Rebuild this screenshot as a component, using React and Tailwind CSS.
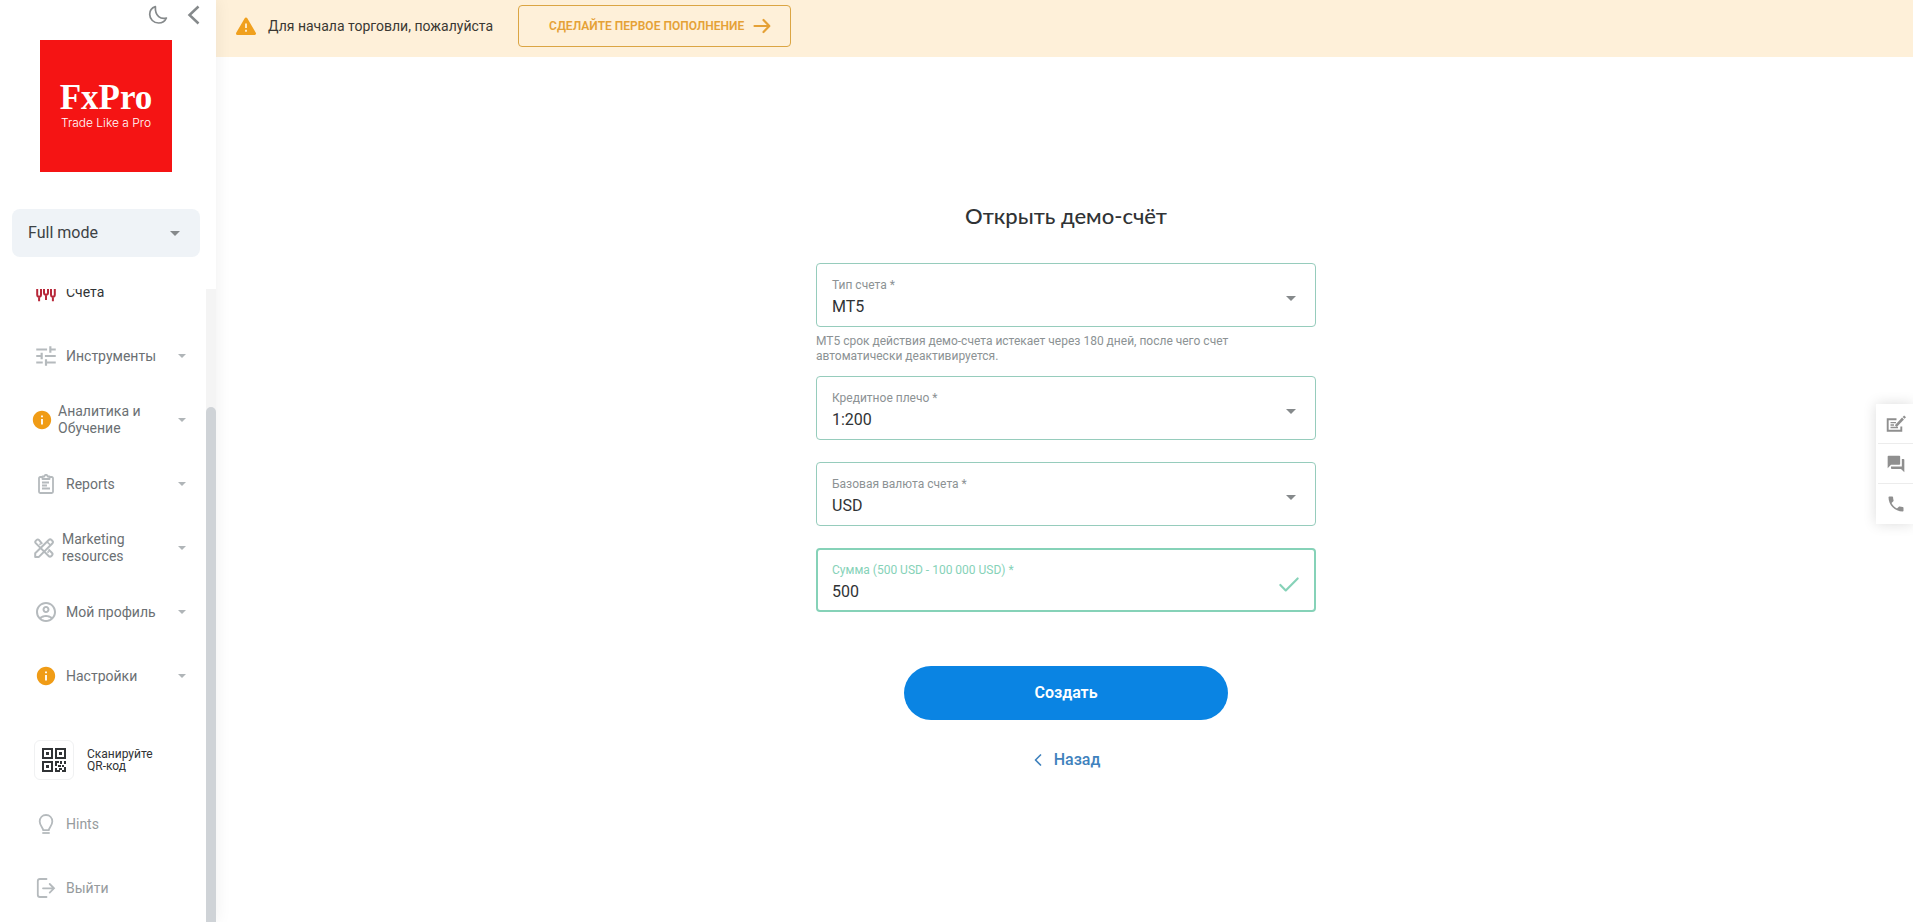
import React from 'react'
import {
  MdInfo,
  MdOutlineAccountCircle,
  MdPhone,
  MdQuestionAnswer,
  MdTune,
} from 'react-icons/md'
import { Check, ChevronLeft } from 'lucide-react'

function Caret({ className }) {
  return (
    <svg viewBox="0 0 10 5" className={className} fill="currentColor" aria-hidden="true">
      <path d="M0 0h10L5 5z" />
    </svg>
  )
}

function MoonIcon() {
  return (
    <svg viewBox="0 0 20 20" className="size-5" fill="none" stroke="currentColor" strokeWidth="1.7" strokeLinejoin="round">
      <path d="M7.4 1.6C4 2.7 1.7 5.8 1.7 9.3c0 4.9 4 8.7 8.9 8.7 3.5 0 6.5-2 7.8-5-5.300 1.300-11.600-1.200-11-11.400z" />
    </svg>
  )
}

function WarningIcon() {
  return (
    <svg viewBox="0 0 24 24" className="size-6 shrink-0">
      <path d="M12 5 20.500 19.500H3.500z" fill="#f0a01e" stroke="#f0a01e" strokeWidth="3" strokeLinejoin="round" />
      <path d="M12 9.500v4.500M12 15.800v2" stroke="#fef0d9" strokeWidth="1.800" />
    </svg>
  )
}

function ArrowIcon() {
  return (
    <svg viewBox="0 0 20 20" className="size-5 shrink-0" fill="none" stroke="currentColor" strokeWidth="2.200" strokeLinecap="round" strokeLinejoin="round">
      <path d="M2.500 10h14.500M11.500 4l5.800 6-5.800 6" />
    </svg>
  )
}

function AccountsIcon() {
  return (
    <svg viewBox="0 0 20 20" className="size-5" fill="none" stroke="#b8283a" strokeWidth="2">
      <path d="M1.200 4v8.500c0 1.500.6 2.200 1.900 2.200S5 14 5 12.500V4M3.100 14.700v4.500" />
      <path d="M8 4v6.500c0 1.500.7 2.200 2 2.200s2-.7 2-2.200V4M10 12.700v5.300" />
      <path d="M15 4v8.500c0 1.500.6 2.200 1.900 2.200s1.900-.7 1.900-2.200V4M16.900 14.700v4.500" />
    </svg>
  )
}

function ClipboardIcon() {
  return (
    <svg viewBox="0 0 20 20" className="size-5" fill="none" stroke="currentColor" strokeWidth="1.800" strokeLinejoin="round">
      <path d="M6.500 3H4.200c-.7 0-1.200.5-1.200 1.200v13.600c0 .7.5 1.200 1.200 1.200h11.600c.7 0 1.200-.5 1.200-1.200V4.200c0-.7-.5-1.200-1.200-1.200h-2.300" />
      <path d="M6.500 5V2.500h1.800c.2-1 .8-1.700 1.700-1.700s1.500.7 1.700 1.700h1.800V5z" />
      <path d="M6 8.500h7M6 11.500h5M6 14.500h8" />
    </svg>
  )
}

function ToolsIcon() {
  return (
    <svg viewBox="0 0 20 20" className="size-5" fill="none" stroke="currentColor" strokeWidth="2" strokeLinejoin="round">
      <path d="M8.200 5.800 4.900 1.900a1.500 1.500 0 0 0-2.200 0l-1 1a1.500 1.500 0 0 0 0 2.200l13.200 13.100a1.500 1.500 0 0 0 2.200 0l1-1a1.500 1.500 0 0 0 0-2.200l-3.600-3.500" />
      <path d="M1.200 18.900v-3.700L15 1.700a1.500 1.500 0 0 1 2.200 0l1.300 1.300a1.500 1.500 0 0 1 0 2.200L4.900 18.900z" />
      <path d="M13 3.800 16.400 7M5.500 6.700l1.200-1.200M13.500 14.600l1.200-1.200" strokeWidth="1.600" />
    </svg>
  )
}

function BulbIcon() {
  return (
    <svg viewBox="0 0 20 20" className="size-5" fill="none" stroke="currentColor" strokeWidth="1.800">
      <path d="M7.200 16.200c0-2.700-3.500-4.400-3.500-8.700C3.700 3.600 6.400 1 10 1s6.300 2.600 6.300 6.500c0 4.300-3.500 6-3.500 8.700z" strokeLinejoin="round" />
      <path d="M6.300 19h7.400" />
    </svg>
  )
}

function ExitIcon() {
  return (
    <svg viewBox="0 0 20 20" className="size-5" fill="none" stroke="currentColor" strokeWidth="1.800" strokeLinecap="round">
      <path d="M10.500 1H4C2.600 1 1.800 1.800 1.800 3v14c0 1.200.8 2 2.200 2h6.500" />
      <path d="M7 10.300h11M13.700 6l4.300 4.300-4.300 4.300" />
    </svg>
  )
}

function QrIcon() {
  return (
    <svg viewBox="0 0 24 24" className="size-6" fill="#303335">
      <path fillRule="evenodd" d="M0 0h11v11H0zM2 2v7h7V2zM13 0h11v11H13zM15 2v7h7V2zM0 13h11v11H0zM2 15v7h7v-7z" />
      <path d="M4 4h3v3H4zM17 4h3v3h-3zM4 17h3v3H4z" />
      <path d="M13 13h4v2h-2v3h-2zM18 13h2v3h-2zM22 13h2v3h-2zM16 17h3v2h-3zM20 17h2v2h-2zM13 20h2v2h3v2h-5zM17 20h3v2h-3zM22 19h2v5h-4v-2h2z" />
    </svg>
  )
}

function EditNoteIcon() {
  return (
    <svg viewBox="0 0 20 18" className="h-[18px] w-5" fill="none" stroke="currentColor" strokeWidth="1.900">
      <path d="M10.500 4.200H1.700v11.600h13.600v-4.300" />
      <path d="M4.500 7.700h5.500M4.500 10h3.500M4.500 12.500h7.500" strokeWidth="1.300" />
      <path d="M9.800 11.200 17 3.500" strokeWidth="2.600" />
      <path d="m17.600 2.900 1.500-1.600" strokeWidth="2.600" />
    </svg>
  )
}

const menu = [
  { label: 'Инструменты', icon: <MdTune size={26} />, row: 'gap-2.5 pl-9' },
  { label: 'Аналитика и Обучение', icon: <MdInfo size={22} className="text-[#f09c16]" />, row: 'gap-1.5 pl-8' },
  { label: 'Reports', icon: <ClipboardIcon />, row: 'gap-2.5 pl-9' },
  { label: 'Marketing resources', icon: <ToolsIcon />, row: 'gap-2 pl-[34px]' },
  { label: 'Мой профиль', icon: <MdOutlineAccountCircle size={24} />, row: 'gap-2.5 pl-9' },
  { label: 'Настройки', icon: <MdInfo size={22} className="text-[#f09c16]" />, row: 'gap-2.5 pl-9' },
]

function IconBox({ children }) {
  return <span className="flex size-5 shrink-0 items-center justify-center text-[#b5babd] [&>svg]:shrink-0">{children}</span>
}

function Sidebar() {
  return (
    <aside className="z-10 flex h-screen w-[216px] shrink-0 flex-col bg-white shadow-[0_0_16px_rgba(0,0,0,0.07)]">
      <div className="flex h-10 items-start justify-end gap-3 pt-[5px] pr-4 text-[#85898b]">
        <button type="button" aria-label="Тёмная тема"><MoonIcon /></button>
        <button type="button" aria-label="Свернуть меню">
          <svg viewBox="0 0 20 20" className="size-5" fill="none" stroke="currentColor" strokeWidth="2.500">
            <path d="M18.500 1.500 9.500 10l9 8.500" />
          </svg>
        </button>
      </div>

      <a href="#" className="ml-10 flex size-[132px] shrink-0 flex-col items-center justify-center bg-[#f51414] text-white">
        <span className="font-['Liberation_Serif',serif] text-[35px] leading-[34px] font-bold">FxPro</span>
        <span className="font-[Inter,sans-serif] text-xs leading-4 font-light">Trade Like a Pro</span>
      </a>

      <label className="mt-[37px] mr-4 ml-3 flex h-12 shrink-0 items-center rounded-lg bg-[#eff3f7] pr-5 pl-4">
        <select aria-label="Mode" className="flex-1 appearance-none text-base text-[#3d4245] outline-none">
          <option>Full mode</option>
        </select>
        <Caret className="h-[5px] w-2.5 text-[#85898b]" />
      </label>

      <div className="mt-8 flex min-h-0 flex-1">
        <nav className="flex flex-1 flex-col justify-end overflow-hidden pb-0.5 text-sm leading-[17px] text-[#6b7073]">
          <a href="#" className="flex h-16 shrink-0 items-center gap-2.5 pl-9 text-[#303335]">
            <IconBox><AccountsIcon /></IconBox>
            Счета
          </a>
          {menu.map((item) => (
            <button key={item.label} type="button" className={`flex h-16 w-full shrink-0 items-center pr-5 text-left ${item.row}`}>
              <IconBox>{item.icon}</IconBox>
              <span className="w-0 flex-1">{item.label}</span>
              <Caret className="h-1 w-2 text-[#b0b5b8]" />
            </button>
          ))}
          <a href="#" className="mt-5 flex h-16 shrink-0 items-center gap-[13px] pl-[34px] text-xs leading-3 text-[#303335]">
            <span className="flex size-10 items-center justify-center rounded-md border border-[#f0f1f2]"><QrIcon /></span>
            <span className="w-20">Сканируйте QR-код</span>
          </a>
          <a href="#" className="flex h-16 shrink-0 items-center gap-2.5 pl-9 text-[#969b9d]">
            <IconBox><BulbIcon /></IconBox>
            Hints
          </a>
          <a href="#" className="flex h-16 shrink-0 items-center gap-2.5 pl-9 text-[#969b9d]">
            <IconBox><ExitIcon /></IconBox>
            Выйти
          </a>
        </nav>
        <div className="flex w-2.5 flex-col justify-end bg-[#f4f4f4]">
          <div className="h-[81.4%] rounded-t-full bg-[#cfd3d7]" />
        </div>
      </div>
    </aside>
  )
}

function Banner() {
  return (
    <div className="flex h-[57px] items-start bg-[#fef0d9] pt-[5px] pl-[18px]">
      <div className="flex h-[42px] items-center">
        <WarningIcon />
        <span className="ml-2.5 text-sm text-[#3a3833]">Для начала торговли, пожалуйста</span>
        <button type="button" className="ml-[25px] flex h-[42px] items-center gap-2 rounded border border-[#dba543] px-[30px] pr-[18px] text-xs font-semibold text-[#e5a136]">
          СДЕЛАЙТЕ ПЕРВОЕ ПОПОЛНЕНИЕ
          <ArrowIcon />
        </button>
      </div>
    </div>
  )
}

function SelectField({ id, label, value }) {
  return (
    <div className="flex h-16 items-center rounded border border-[#96ccbc] pt-[3px] pr-[19px] pl-[15px]">
      <div className="flex-1">
        <label htmlFor={id} className="block text-xs leading-4 text-[#8c9294]">{label}</label>
        <select id={id} className="mt-1 block h-5 w-full appearance-none text-base leading-5 text-[#303335] outline-none">
          <option>{value}</option>
        </select>
      </div>
      <Caret className="mt-1 h-[5px] w-2.5 text-[#85898b]" />
    </div>
  )
}

function DemoForm() {
  return (
    <form className="mx-auto mt-[143px] flex w-full max-w-[500px] flex-col">
      <h1 className="text-center font-[Lato,sans-serif] text-[22px] leading-8 font-medium text-[#303335]">Открыть демо-счёт</h1>
      <div className="mt-[31px]">
        <SelectField id="type" label="Тип счета *" value="MT5" />
        <p className="mt-[7px] h-[42px] pr-16 text-xs leading-[15px] text-[#8c9294]">
          MT5 срок действия демо-счета истекает через 180 дней, после чего счет автоматически деактивируется.
        </p>
      </div>
      <div className="flex flex-col gap-[22px]">
        <SelectField id="leverage" label="Кредитное плечо *" value="1:200" />
        <SelectField id="currency" label="Базовая валюта счета *" value="USD" />
        <div className="flex h-16 items-center rounded border-2 border-[#86d2b8] pt-[3px] pr-3 pl-3.5">
          <div className="flex-1">
            <label htmlFor="amount" className="block text-xs leading-4 text-[#86d2b8]">Сумма (500 USD - 100 000 USD) *</label>
            <input id="amount" defaultValue="500" className="mt-1 block h-5 w-full text-base leading-5 text-[#303335] outline-none" />
          </div>
          <Check size={26} className="mt-1.5 text-[#86d2b8]" />
        </div>
      </div>
      <button type="submit" className="mx-auto mt-[54px] h-[54px] w-[324px] rounded-full bg-[#0a84e3] font-semibold text-white">
        Создать
      </button>
      <a href="#" className="mx-auto mt-7 flex items-center gap-2.5 font-medium text-[#3f82bd]">
        <ChevronLeft size={20} className="-mx-1" />
        <span>Назад</span>
      </a>
    </form>
  )
}

function SideWidget() {
  return (
    <div className="fixed top-[404px] right-0 flex w-[37px] flex-col divide-y divide-[#ececec] bg-white pl-0.5 text-[#8f8f8f] shadow-[0_0_14px_rgba(0,0,0,0.14)]">
      <button type="button" aria-label="Отзыв" className="flex h-10 items-center justify-center"><EditNoteIcon /></button>
      <button type="button" aria-label="Чат" className="flex h-10 items-center justify-center"><MdQuestionAnswer size={20} /></button>
      <button type="button" aria-label="Телефон" className="flex h-10 items-center justify-center"><MdPhone size={20} /></button>
    </div>
  )
}

function App() {
  return (
    <div className="flex min-h-screen bg-white font-[Roboto,sans-serif]">
      <Sidebar />
      <main className="flex-1">
        <Banner />
        <div className="pl-[3px]">
          <DemoForm />
        </div>
      </main>
      <SideWidget />
    </div>
  )
}

export default App
